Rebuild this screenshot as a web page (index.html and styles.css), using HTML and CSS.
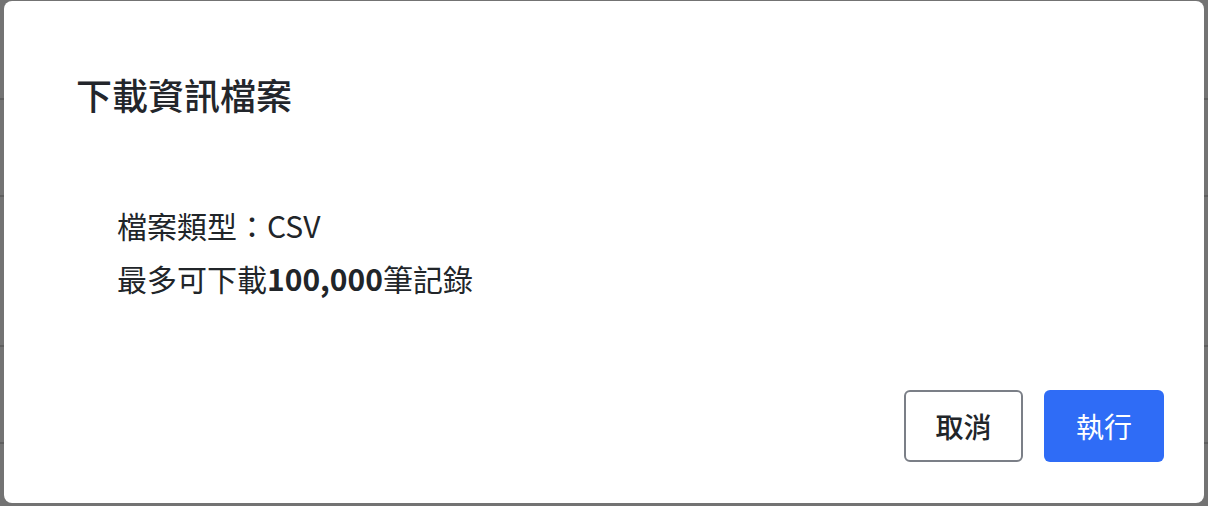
FILE: index.html
```html
<!DOCTYPE html>
<html lang="zh-Hant">
<head>
<meta charset="utf-8">
<title>下載資訊檔案</title>
<link rel="stylesheet" href="styles.css">
</head>
<body>
<div class="page">
  <div class="row row-a"></div>
  <div class="row row-b"></div>
  <div class="row row-c"></div>
  <div class="row row-d"></div>
</div>
<div class="overlay">
  <div class="modal" role="dialog">
    <h2 class="modal-title">下載資訊檔案</h2>
    <div class="modal-body">
      <p class="line">檔案類型：CSV</p>
      <p class="line">最多可下載<strong>100,000</strong>筆記錄</p>
    </div>
    <div class="modal-footer">
      <button class="btn btn-cancel">取消</button>
      <button class="btn btn-primary">執行</button>
    </div>
  </div>
</div>
</body>
</html>
```

FILE: styles.css
```css
html, body {
  margin: 0;
  padding: 0;
}
body {
  width: 1208px;
  height: 506px;
  overflow: hidden;
  background: #737373;
  font-family: "Noto Sans CJK TC", "Noto Sans", sans-serif;
  color: #212529;
}
.page {
  display: flex;
  flex-direction: column;
}
.row {
  border-bottom: 2px solid #5f5f5f;
}
.row-a { height: 98px; }
.row-b { height: 95px; }
.row-c { height: 148px; }
.row-d { height: 95px; }

.overlay {
  position: fixed;
  inset: 0;
  padding: 1px 4px 3px 4px;
  display: flex;
}
.modal {
  flex: 1;
  background: #ffffff;
  border-radius: 8px;
  display: flex;
  flex-direction: column;
  padding: 71px 40px 41px 72px;
}
.modal-title {
  margin: 0;
  font-size: 36px;
  line-height: 44px;
  font-weight: 500;
  color: #23262b;
}
.modal-body {
  margin-top: 83px;
  padding-left: 41px;
}
.line {
  margin: 0;
  font-size: 30px;
  line-height: 53px;
  font-weight: 400;
}
.line strong {
  font-weight: 700;
}
.modal-footer {
  margin-top: auto;
  display: flex;
  justify-content: flex-end;
  gap: 21px;
}
.btn {
  font-family: inherit;
  height: 72px;
  font-size: 28px;
  line-height: 1;
  border-radius: 6px;
  padding: 0;
  cursor: pointer;
}
.btn-cancel {
  width: 119px;
  background: #ffffff;
  border: 2px solid #7b7f87;
  color: #212529;
  font-weight: 500;
}
.btn-primary {
  width: 120px;
  background: #2f6cf6;
  border: none;
  color: #ffffff;
  font-weight: 400;
}
```
